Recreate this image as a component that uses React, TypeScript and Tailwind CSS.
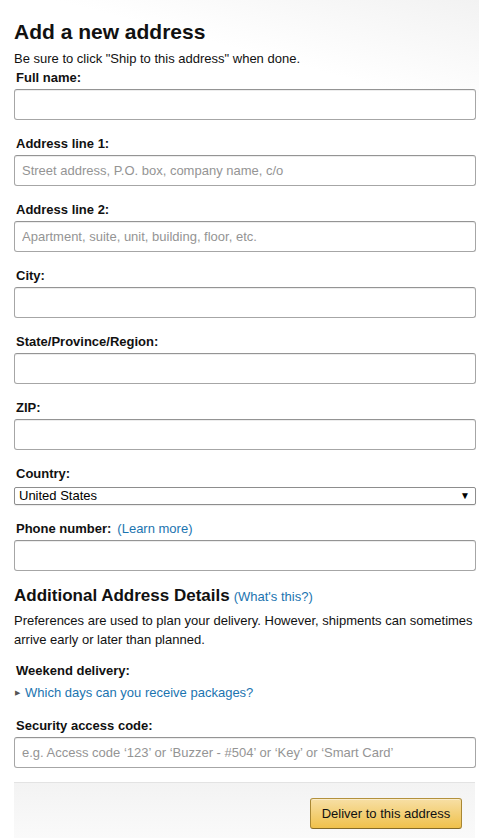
import React from "react";

const inputCls =
  "block w-full h-[31px] px-[7px] border border-[#a6a6a6] border-t-[#949494] rounded-[3px] bg-white text-[13px] text-[#111] shadow-[inset_0_1px_0_rgba(0,0,0,0.07)] outline-none placeholder:text-[#949494]";

function Field({ label, placeholder, extra }: { label: string; placeholder?: string; extra?: React.ReactNode }) {
  return (
    <div className="mb-[14px]">
      <div className="pl-[2px] pb-[2px] text-[13px] leading-[19px] font-bold text-[#111]">
        {label}
        {extra}
      </div>
      <input className={inputCls} placeholder={placeholder} />
    </div>
  );
}

export default function App() {
  return (
    <div
      className="min-h-[838px] bg-white bg-[linear-gradient(195deg,#f2f2f2_0px,#ffffff_110px)] pl-[14px] pr-[3px] pt-[19px] text-[#111]"
      style={{ fontFamily: '"Liberation Sans", Arial, sans-serif' }}
    >
      <h1 className="text-[21px] leading-[26px] font-bold text-[#111]">Add a new address</h1>
      <p className="mt-[4px] text-[13px] leading-[19px]">
        Be sure to click "Ship to this address" when done.
      </p>
      <Field label="Full name:" />
      <Field label="Address line 1:" placeholder="Street address, P.O. box, company name, c/o" />
      <Field label="Address line 2:" placeholder="Apartment, suite, unit, building, floor, etc." />
      <Field label="City:" />
      <Field label="State/Province/Region:" />
      <Field label="ZIP:" />
      <div className="mb-[14px]">
        <div className="pl-[2px] pb-[2px] text-[13px] leading-[19px] font-bold text-[#111]">Country:</div>
        <div className="mt-[2px] flex h-[18px] items-center justify-between border border-[#8d8d8d] rounded-[2px] bg-white pl-[4px] pr-[5px] text-[13px] text-black shadow-[0_1px_1px_rgba(0,0,0,0.08)]">
          <span>United States</span>
          <span className="text-[10px] leading-none">▼</span>
        </div>
      </div>
      <Field
        label="Phone number:"
        extra={
          <span className="ml-[6px] font-normal text-[#1b74b0]">(Learn more)</span>
        }
      />
      <div className="flex items-baseline gap-[4px]">
        <h2 className="text-[17px] leading-[22px] font-bold text-[#111]">Additional Address Details</h2>
        <span className="text-[13px] text-[#1b74b0]">(What's this?)</span>
      </div>
      <p className="mt-[4px] pr-[2px] text-[13px] leading-[19px] text-[#111]">
        Preferences are used to plan your delivery. However, shipments can sometimes arrive early or later than planned.
      </p>
      <div className="mt-[12px] pl-[2px] text-[13px] leading-[19px] font-bold">Weekend delivery:</div>
      <div className="mt-[3px] flex items-center text-[13px] leading-[19px]">
        <span className="ml-[1px] mr-[5px] text-[7px] text-[#555]">▶</span>
        <span className="text-[#1b74b0]">Which days can you receive packages?</span>
      </div>
      <div className="mt-[14px]">
        <Field
          label="Security access code:"
          placeholder="e.g. Access code ‘123’ or ‘Buzzer - #504’ or ‘Key’ or ‘Smart Card’"
        />
      </div>
      <div className="mr-[1px] flex h-[56px] justify-end border-t border-[#e3e3e3] bg-[linear-gradient(to_bottom,#f3f3f3,#fafafa)] pt-[15px] pr-[13px]">
        <button className="h-[31px] w-[152px] rounded-[3px] border border-[#a88734] border-t-[#b3913c] border-b-[#846a29] bg-[linear-gradient(to_bottom,#f7dfa5,#f0c14b)] text-[13px] text-[#111] shadow-[inset_0_1px_0_rgba(255,255,255,0.4)]">
          Deliver to this address
        </button>
      </div>
    </div>
  );
}
